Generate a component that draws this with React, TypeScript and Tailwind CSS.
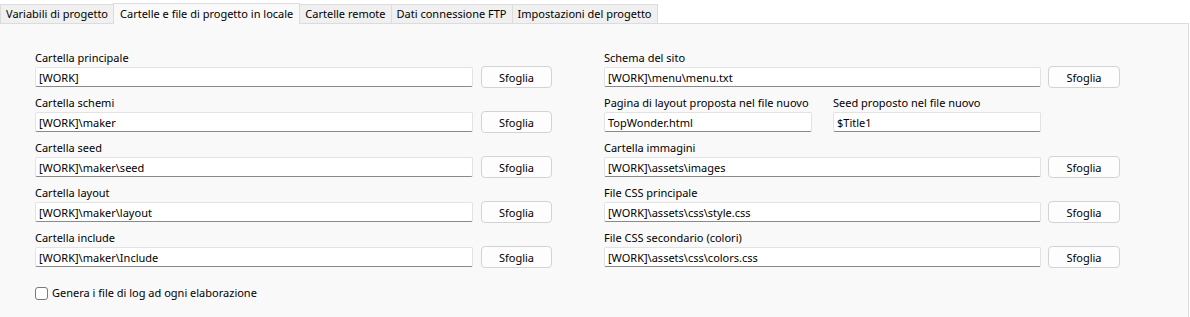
import React, { useState } from "react";

const font = { fontFamily: '"Noto Sans", "Open Sans", sans-serif' };

const tabs = [
  "Variabili di progetto",
  "Cartelle e file di progetto in locale",
  "Cartelle remote",
  "Dati connessione FTP",
  "Impostazioni del progetto",
];

function Field({ value, width }: { value: string; width: string }) {
  return (
    <div
      className={`${width} h-[20px] bg-white border border-[#e3e3e3] border-b-[#8a8a8a] rounded-[2px] px-[3px] flex items-center text-[11px] text-black leading-none`}
    >
      {value}
    </div>
  );
}

function Browse({ width }: { width: string }) {
  return (
    <button
      className={`${width} h-[22px] bg-[#fdfdfd] border border-[#d3d3d3] rounded-[4px] text-[11px] text-black leading-none`}
    >
      Sfoglia
    </button>
  );
}

function Row({
  label,
  value,
  fieldW,
  btnW,
  gap,
}: {
  label: string;
  value: string;
  fieldW: string;
  btnW: string;
  gap: string;
}) {
  return (
    <div className="flex flex-col">
      <div className="h-[16px] text-[11px] leading-[16px] text-black">{label}</div>
      <div className={`flex items-center h-[22px] ${gap}`}>
        <Field value={value} width={fieldW} />
        <Browse width={btnW} />
      </div>
    </div>
  );
}

export default function App() {
  const [active, setActive] = useState(1);
  const [log, setLog] = useState(false);

  const left = [
    ["Cartella principale", "[WORK]"],
    ["Cartella schemi", "[WORK]\\maker"],
    ["Cartella seed", "[WORK]\\maker\\seed"],
    ["Cartella layout", "[WORK]\\maker\\layout"],
    ["Cartella include", "[WORK]\\maker\\Include"],
  ];

  return (
    <div className="w-[1190px] h-[317px] bg-white flex flex-col overflow-hidden" style={font}>
      {/* tab strip */}
      <div className="flex items-end h-[23px] pt-[2px]">
        {tabs.map((t, i) =>
          i === active ? (
            <div
              key={t}
              onClick={() => setActive(i)}
              className="h-[21px] -mb-px -ml-px z-10 px-[6px] flex items-center bg-[#f9f9f9] border border-b-0 border-[#dcdcdc] text-[11px] text-black"
            >
              {t}
            </div>
          ) : (
            <div
              key={t}
              onClick={() => setActive(i)}
              className="h-[19px] px-[5px] flex items-center bg-[#f0f0f0] border border-b-0 border-[#dcdcdc] -ml-px first:ml-0 text-[11px] text-black"
            >
              {t}
            </div>
          )
        )}
      </div>

      {/* panel */}
      <div className="flex-1 w-[1189px] bg-[#f9f9f9] border-t border-r border-[#dcdcdc] pt-[26px] pl-[35px] flex flex-col">
        <div className="flex">
          <div className="w-[569px] flex flex-col gap-[7px]">
            {left.map(([l, v]) => (
              <Row key={l} label={l} value={v} fieldW="w-[438px]" btnW="w-[71px]" gap="gap-[8px]" />
            ))}
          </div>

          <div className="flex flex-col gap-[7px]">
            <Row
              label="Schema del sito"
              value="[WORK]\menu\menu.txt"
              fieldW="w-[437px]"
              btnW="w-[72px]"
              gap="gap-[7px]"
            />
            <div className="flex">
              <div className="w-[229px] flex flex-col">
                <div className="h-[16px] text-[11px] leading-[16px] text-black whitespace-nowrap">
                  Pagina di layout proposta nel file nuovo
                </div>
                <div className="h-[22px] flex items-center">
                  <Field value="TopWonder.html" width="w-[208px]" />
                </div>
              </div>
              <div className="flex flex-col">
                <div className="h-[16px] text-[11px] leading-[16px] text-black">
                  Seed proposto nel file nuovo
                </div>
                <div className="h-[22px] flex items-center">
                  <Field value="$Title1" width="w-[208px]" />
                </div>
              </div>
            </div>
            <Row
              label="Cartella immagini"
              value="[WORK]\assets\images"
              fieldW="w-[437px]"
              btnW="w-[72px]"
              gap="gap-[7px]"
            />
            <Row
              label="File CSS principale"
              value="[WORK]\assets\css\style.css"
              fieldW="w-[437px]"
              btnW="w-[72px]"
              gap="gap-[7px]"
            />
            <Row
              label="File CSS secondario (colori)"
              value="[WORK]\assets\css\colors.css"
              fieldW="w-[437px]"
              btnW="w-[72px]"
              gap="gap-[7px]"
            />
          </div>
        </div>

        <label className="mt-[17px] flex items-center gap-[4px] text-[11px] text-black cursor-default">
          <span
            onClick={() => setLog(!log)}
            className="w-[13px] h-[13px] bg-white border border-[#7a7a7a] rounded-[3px] flex items-center justify-center text-[10px] leading-none"
          >
            {log ? "✓" : ""}
          </span>
          Genera i file di log ad ogni elaborazione
        </label>
      </div>
    </div>
  );
}
